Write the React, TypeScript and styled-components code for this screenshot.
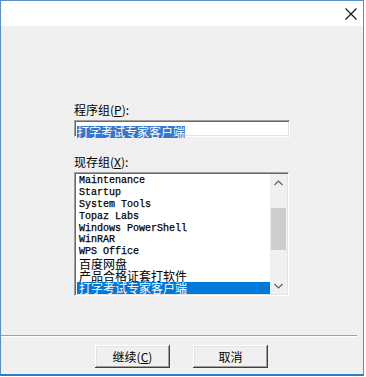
import React from 'react';
import styled, { createGlobalStyle } from 'styled-components';

const GlobalStyle = createGlobalStyle`
  html, body {
    margin: 0;
    padding: 0;
    background: #ffffff;
  }
`;

const cjk = `"SimSun", "Noto Sans CJK SC", "Liberation Sans", sans-serif`;

const StyledWindow = styled.div`
  width: 364px;
  height: 376px;
  border: 1px solid #5a8fc4;
  border-bottom: 2px solid #2f7bc0;
  box-sizing: border-box;
  display: flex;
  flex-direction: column;
  background: #f0f0f0;
  font-family: ${cjk};
  font-size: 12px;
  color: #000;
`;

const StyledTitleBar = styled.div`
  height: 25px;
  background: #ffffff;
  display: flex;
  justify-content: flex-end;
  align-items: center;
  padding-right: 6px;
`;

const StyledBody = styled.div`
  flex: 1;
  display: flex;
  flex-direction: column;
  padding: 76px 0 0 73px;
`;

const StyledLabel = styled.div`
  height: 16px;
  line-height: 16px;
  margin-bottom: 2px;
`;

const StyledInput = styled.div`
  width: 216px;
  height: 17px;
  box-sizing: border-box;
  background: #fff;
  border-top: 1px solid #a0a0a0;
  border-left: 1px solid #a0a0a0;
  border-bottom: 1px solid #ffffff;
  border-right: 1px solid #ffffff;
  box-shadow: inset 1px 1px 0 #696969, inset -1px -1px 0 #e3e3e3;
  padding: 2px 0 0 2px;
  margin-bottom: 17px;
`;

const StyledSelected = styled.span`
  display: inline-block;
  background: #3378cc;
  color: #fff;
  line-height: 12px;
  height: 12px;
`;

const StyledList = styled.div`
  width: 215px;
  height: 124px;
  box-sizing: border-box;
  background: #fff;
  border-top: 1px solid #a0a0a0;
  border-left: 1px solid #a0a0a0;
  border-bottom: 1px solid #ffffff;
  border-right: 1px solid #ffffff;
  box-shadow: inset 1px 1px 0 #696969, inset -1px -1px 0 #e3e3e3;
  display: flex;
  padding: 1px 1px 1px 2px;
`;

const StyledRows = styled.div`
  flex: 1;
  display: flex;
  flex-direction: column;
  padding-top: 1px;
`;

const StyledRow = styled.div<{ mono?: boolean; active?: boolean }>`
  height: 11.9px;
  flex-shrink: 0;
  line-height: 12px;
  padding-left: 2px;
  white-space: nowrap;
  font-family: ${({ mono }) =>
    mono ? `"Liberation Mono", "Courier New", monospace` : cjk};
  font-size: ${({ mono }) => (mono ? '10px' : '12px')};
  ${({ mono }) => mono && '-webkit-text-stroke: 0.25px #000;'}
  ${({ active }) => active && 'background: #0078d7; color: #fff;'}
`;

const StyledScrollbar = styled.div`
  width: 17px;
  background: #f0f0f0;
  display: flex;
  flex-direction: column;
  align-items: center;
`;

const StyledArrow = styled.div`
  height: 17px;
  width: 17px;
  display: flex;
  align-items: center;
  justify-content: center;
`;

const StyledTrack = styled.div`
  flex: 1;
  width: 17px;
  display: flex;
  flex-direction: column;
  padding-top: 17px;
  box-sizing: border-box;
`;

const StyledThumb = styled.div`
  width: 15px;
  margin-left: 1px;
  height: 42px;
  background: #cdcdcd;
`;

const StyledFooter = styled.div`
  border-top: 1px solid #a0a0a0;
  box-shadow: 0 1px 0 #ffffff inset;
  margin-right: 6px;
  height: 39px;
  display: flex;
  gap: 23px;
  padding: 9px 0 0 94px;
  box-sizing: border-box;
`;

const StyledButton = styled.button`
  width: 75px;
  height: 23px;
  box-sizing: border-box;
  background: #f0f0f0;
  font-family: ${cjk};
  font-size: 12px;
  color: #000;
  border: none;
  border-radius: 0;
  padding: 0;
  box-shadow: inset -1px -1px 0 #404040, inset 1px 1px 0 #ffffff,
    inset -2px -2px 0 #a0a0a0, inset 2px 2px 0 #e3e3e3;
`;

const Key = styled.span`
  text-decoration: underline;
`;

const items = [
  'Maintenance',
  'Startup',
  'System Tools',
  'Topaz Labs',
  'Windows PowerShell',
  'WinRAR',
  'WPS Office',
];

const App = () => {
  return (
    <>
      <GlobalStyle />
      <StyledWindow>
        <StyledTitleBar>
          <svg width="12" height="12" viewBox="0 0 12 12">
            <path d="M0.5 0.5L11.5 11.5M11.5 0.5L0.5 11.5" stroke="#111" strokeWidth="1.1" />
          </svg>
        </StyledTitleBar>
        <StyledBody>
          <StyledLabel>
            程序组(<Key>P</Key>):
          </StyledLabel>
          <StyledInput>
            <StyledSelected>打字考试专家客户端</StyledSelected>
          </StyledInput>
          <StyledLabel>
            现存组(<Key>X</Key>):
          </StyledLabel>
          <StyledList>
            <StyledRows>
              {items.map((item) => (
                <StyledRow key={item} mono>
                  {item}
                </StyledRow>
              ))}
              <StyledRow>百度网盘</StyledRow>
              <StyledRow>产品合格证套打软件</StyledRow>
              <StyledRow active>打字考试专家客户端</StyledRow>
            </StyledRows>
            <StyledScrollbar>
              <StyledArrow>
                <svg width="9" height="6" viewBox="0 0 9 6">
                  <path d="M0.5 5L4.5 1L8.5 5" stroke="#606060" strokeWidth="1.2" fill="none" />
                </svg>
              </StyledArrow>
              <StyledTrack>
                <StyledThumb />
              </StyledTrack>
              <StyledArrow>
                <svg width="9" height="6" viewBox="0 0 9 6">
                  <path d="M0.5 1L4.5 5L8.5 1" stroke="#606060" strokeWidth="1.2" fill="none" />
                </svg>
              </StyledArrow>
            </StyledScrollbar>
          </StyledList>
        </StyledBody>
        <StyledFooter>
          <StyledButton>
            继续(<Key>C</Key>)
          </StyledButton>
          <StyledButton>取消</StyledButton>
        </StyledFooter>
      </StyledWindow>
    </>
  );
};

export default App;
